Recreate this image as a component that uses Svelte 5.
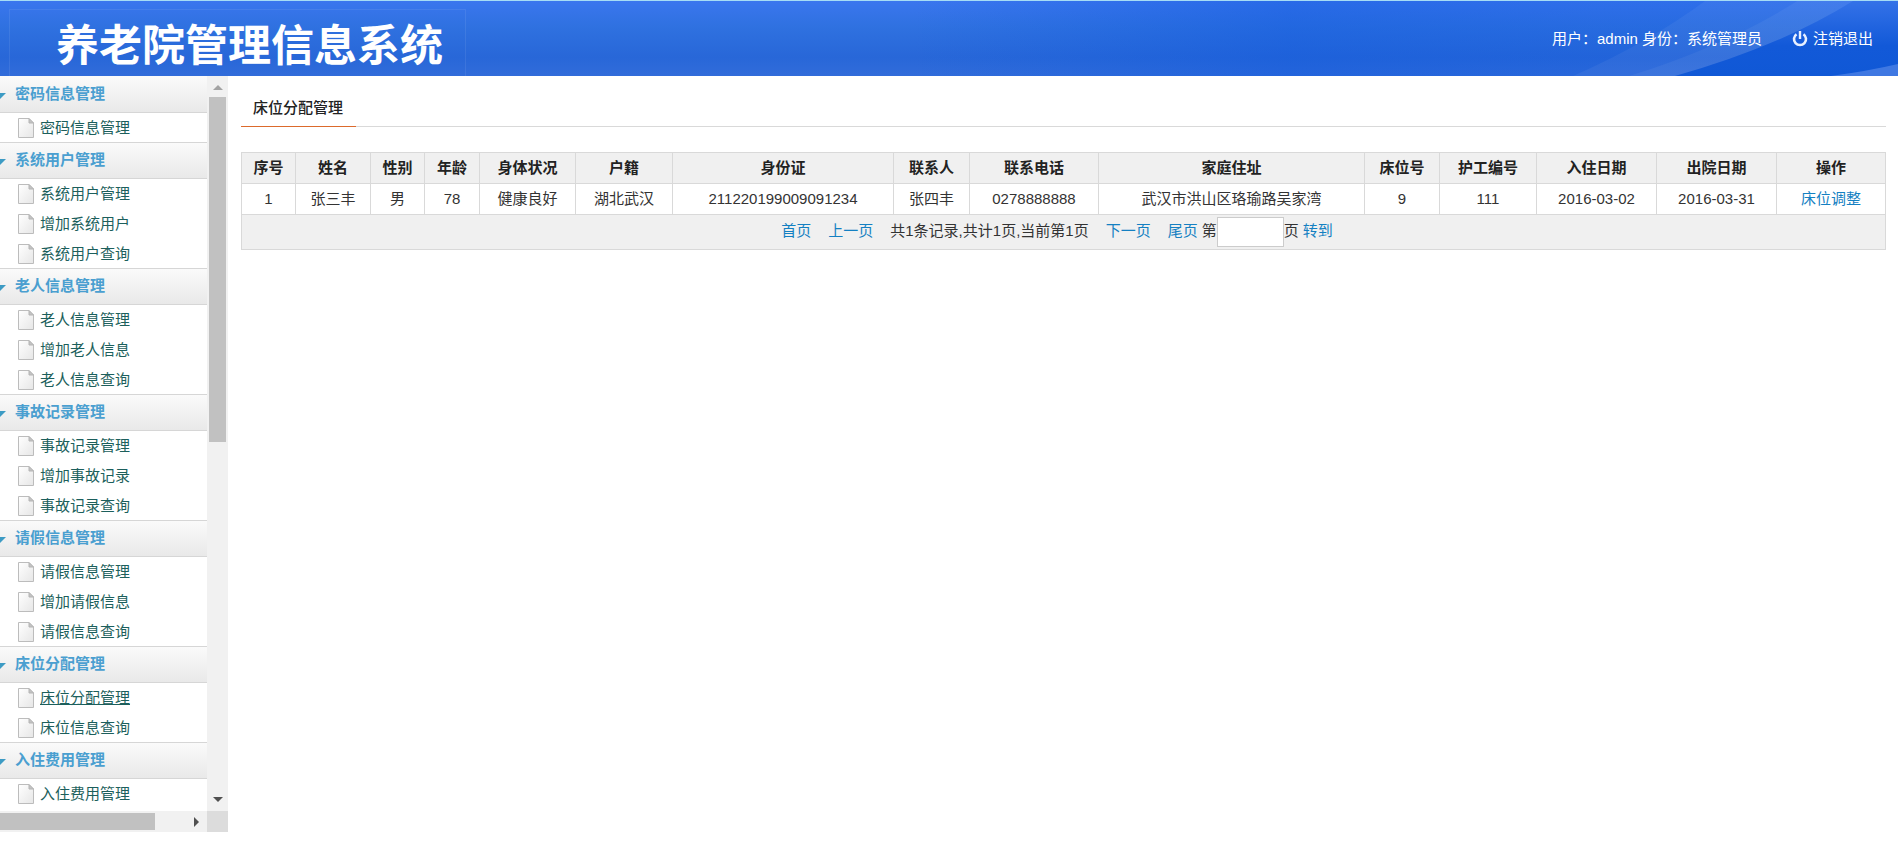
<script>
  let page = $state("");

  const menu = [
    { title: "密码信息管理", items: ["密码信息管理"] },
    { title: "系统用户管理", items: ["系统用户管理", "增加系统用户", "系统用户查询"] },
    { title: "老人信息管理", items: ["老人信息管理", "增加老人信息", "老人信息查询"] },
    { title: "事故记录管理", items: ["事故记录管理", "增加事故记录", "事故记录查询"] },
    { title: "请假信息管理", items: ["请假信息管理", "增加请假信息", "请假信息查询"] },
    { title: "床位分配管理", items: ["床位分配管理", "床位信息查询"] },
    { title: "入住费用管理", items: ["入住费用管理"] }
  ];
  let active = $state("床位分配管理");

  const columns = [
    { name: "序号", width: 54 },
    { name: "姓名", width: 75 },
    { name: "性别", width: 54 },
    { name: "年龄", width: 55 },
    { name: "身体状况", width: 96 },
    { name: "户籍", width: 97 },
    { name: "身份证", width: 221 },
    { name: "联系人", width: 76 },
    { name: "联系电话", width: 129 },
    { name: "家庭住址", width: 266 },
    { name: "床位号", width: 75 },
    { name: "护工编号", width: 97 },
    { name: "入住日期", width: 120 },
    { name: "出院日期", width: 120 },
    { name: "操作", width: 109 }
  ];
  const total = columns.reduce((sum, c) => sum + c.width, 0);

  const rows = [
    ["1", "张三丰", "男", "78", "健康良好", "湖北武汉", "211220199009091234", "张四丰", "0278888888", "武汉市洪山区珞瑜路吴家湾", "9", "111", "2016-03-02", "2016-03-31"]
  ];
</script>

<div class="page">
  <header>
    <svg class="rays" viewBox="0 0 400 75" aria-hidden="true">
      <defs>
        <linearGradient id="shade" x1="0" y1="0" x2="0" y2="1">
          <stop offset="0" stop-color="#3472e8" />
          <stop offset=".6" stop-color="#1259d8" />
          <stop offset="1" stop-color="#1058d6" />
        </linearGradient>
      </defs>
      <path d="M207 0Q150 42 75 75H400V0Z" fill="#fff" opacity=".05" />
      <path d="M299 0Q230 44 131 75H400V0Z" fill="#fff" opacity=".05" />
      <path d="M355 0Q283 45 177 75H400V0Z" fill="url(#shade)" />
      <path d="M333 75Q370 70 400 63V75Z" fill="#3f78e2" />
    </svg>
    <h1>养老院管理信息系统</h1>
    <div class="user">
      <span>用户：admin 身份：系统管理员</span>
      <a href="#logout">
        <svg viewBox="0 0 16 16" width="16" height="16" aria-hidden="true">
          <path d="M4.500 3.200A6 6 0 1 0 11.500 3.200" fill="none" stroke="#e8f0ff" stroke-width="2.600" />
          <path d="M8 0V8" stroke="#e8f0ff" stroke-width="2.400" />
        </svg>
        注销退出
      </a>
    </div>
  </header>

  <div class="body">
    <aside>
      <nav>
        {#each menu as group}
          <section>
            <h2>{group.title}</h2>
            <ul>
              {#each group.items as item}
                <li>
                  <svg viewBox="0 0 16 20" width="16" height="20" aria-hidden="true">
                    <path d="M.5.5H11L15.500 5V19.500H.5Z" fill="url(#paper)" stroke="#bcbcbc" />
                    <path d="M11 .5V5H15.500Z" fill="#c4c4c4" stroke="#b4b4b4" />
                  </svg>
                  <a
                    href="#menu"
                    class:active={item == active && item == group.title}
                    onclick={() => (active = item)}>{item}</a>
                </li>
              {/each}
            </ul>
          </section>
        {/each}
        <svg class="defs" aria-hidden="true">
          <linearGradient id="paper" x1="0" y1="0" x2="1" y2="1">
            <stop offset="0" stop-color="#fff" />
            <stop offset="1" stop-color="#e6e6e6" />
          </linearGradient>
        </svg>
      </nav>
      <div class="vbar">
        <i class="up"></i>
        <div class="vthumb"></div>
        <i class="down"></i>
      </div>
      <div class="hbar">
        <div class="hthumb"></div>
        <i class="right"></i>
      </div>
      <div class="corner"></div>
    </aside>

    <main>
      <div class="tabs"><span>床位分配管理</span></div>
      <table>
        <colgroup>
          {#each columns as c}
            <col style="width: {(c.width / total) * 100}%" />
          {/each}
        </colgroup>
        <thead>
          <tr>
            {#each columns as c}
              <th>{c.name}</th>
            {/each}
          </tr>
        </thead>
        <tbody>
          {#each rows as row}
            <tr>
              {#each row as cell}
                <td>{cell}</td>
              {/each}
              <td><a href="#adjust">床位调整</a></td>
            </tr>
          {/each}
        </tbody>
        <tfoot>
          <tr>
            <td colspan={columns.length}>
              <div class="pager">
                <a href="#first">首页</a>
                <a href="#prev">上一页</a>
                <span>共1条记录,共计1页,当前第1页</span>
                <a href="#next">下一页</a>
                <a href="#last">尾页</a>
                <label>第<input type="text" bind:value={page} />页</label>
                <a href="#go">转到</a>
              </div>
            </td>
          </tr>
        </tfoot>
      </table>
    </main>
  </div>
</div>

<style>
  :global(body) {
    background: #fff;
    color: #333;
    font: 15px/30px "Liberation Sans", "Noto Sans CJK SC", sans-serif;
  }
  .page {
    height: 100vh;
    display: flex;
    flex-direction: column;
    overflow: hidden;
  }
  a {
    color: #1480c2;
    text-decoration: none;
  }

  header {
    position: relative;
    flex: none;
    box-sizing: border-box;
    height: 76px;
    border-top: 1px solid #a6dcf5;
    display: flex;
    justify-content: space-between;
    background:
      linear-gradient(90deg, transparent 48%, rgba(14, 88, 222, 0.4) 68%, rgba(14, 88, 222, 0.25) 84%),
      linear-gradient(#3a76ee, #2f71e0 35%, #2867d8 75%, #316cda);
    color: #fff;
  }
  .rays {
    position: absolute;
    right: 0;
    top: 0;
    width: 400px;
    height: 75px;
  }
  h1 {
    margin: 8px 0 0 9px;
    box-sizing: border-box;
    width: 457px;
    padding-left: 46px;
    border: 1px solid rgba(255, 255, 255, 0.08);
    border-bottom: 0;
    font-size: 43px;
    line-height: 72px;
    white-space: nowrap;
  }
  .user {
    position: relative;
    display: flex;
    gap: 30px;
    margin: 23px 25px 0 0;
    height: 30px;
  }
  .user a {
    display: flex;
    align-items: center;
    gap: 5px;
    color: #fff;
  }

  .body {
    flex: 1;
    min-height: 0;
    display: flex;
  }
  aside {
    flex: none;
    width: 228px;
    margin-bottom: 11px;
    display: grid;
    grid-template: minmax(0, 1fr) 21px / 1fr 21px;
  }
  nav {
    overflow: hidden;
    padding-top: 1px;
  }
  h2 {
    box-sizing: border-box;
    height: 37px;
    margin: -1px 0 0;
    padding-left: 15px;
    border: 1px solid #d6d6d6;
    border-width: 1px 0;
    background: linear-gradient(#fafafa, #e9e9e9);
    color: #4a9fd0;
    font-size: 15px;
    line-height: 34px;
    position: relative;
  }
  h2::before {
    content: "";
    position: absolute;
    left: -6px;
    top: 16px;
    border: 6px solid transparent;
    border-top-color: #3d9bc4;
    border-bottom: 0;
  }
  section:first-child h2 {
    border-top-color: #fafafa;
  }
  ul {
    list-style: none;
    margin: 0;
    padding: 0;
  }
  li {
    display: flex;
    align-items: center;
    gap: 6px;
    height: 30px;
    padding-left: 18px;
  }
  li a {
    color: #1c5f5c;
  }
  li a.active {
    text-decoration: underline;
  }
  .defs {
    position: absolute;
    width: 0;
    height: 0;
  }
  .vbar,
  .hbar {
    background: #f1f1f1;
    display: flex;
    align-items: center;
  }
  .vbar {
    flex-direction: column;
  }
  .vthumb {
    width: 17px;
    height: 47%;
    margin-top: 7px;
    background: #c1c1c1;
  }
  .hthumb {
    width: 75%;
    height: 17px;
    background: #c1c1c1;
  }
  .corner {
    background: #dcdcdc;
  }
  i {
    border: 5px solid transparent;
  }
  .up {
    margin-top: 9px;
    border-top: 0;
    border-bottom-color: #a3a3a3;
  }
  .down {
    margin: auto 0 9px;
    border-bottom: 0;
    border-top-color: #505050;
  }
  .right {
    margin: 0 8px 0 auto;
    border-right: 0;
    border-left-color: #505050;
  }

  main {
    flex: 1;
    min-width: 0;
    padding: 15px 12px 0 13px;
  }
  .tabs {
    display: flex;
    height: 35px;
    margin-bottom: 25px;
    border-bottom: 1px solid #d9d9d9;
  }
  .tabs span {
    height: 35px;
    line-height: 33px;
    padding: 0 13px 0 12px;
    border-bottom: 1px solid #dc6a2c;
    color: #222;
    font-weight: 500;
  }
  table {
    width: 100%;
    table-layout: fixed;
    border-collapse: collapse;
  }
  th,
  td {
    height: 30px;
    padding: 0;
    border: 1px solid #d9d9d9;
    text-align: center;
    white-space: nowrap;
  }
  th,
  tfoot td {
    background: #f0f0f0;
  }
  th {
    color: #222;
  }
  tfoot td {
    height: 34px;
  }
  .pager {
    display: flex;
    justify-content: center;
    height: 34px;
    line-height: 31px;
  }
  .pager a,
  .pager span {
    margin-right: 17px;
  }
  .pager a:nth-last-of-type(2) {
    margin-right: 4px;
  }
  .pager a:last-child {
    margin: 0 13px 0 4px;
  }
  .pager label {
    display: flex;
  }
  input {
    box-sizing: border-box;
    width: 67px;
    height: 30px;
    margin: 2px 0 0;
    padding: 0 4px;
    border: 1px solid #ccc;
    background: #fff;
    font: inherit;
  }
</style>
